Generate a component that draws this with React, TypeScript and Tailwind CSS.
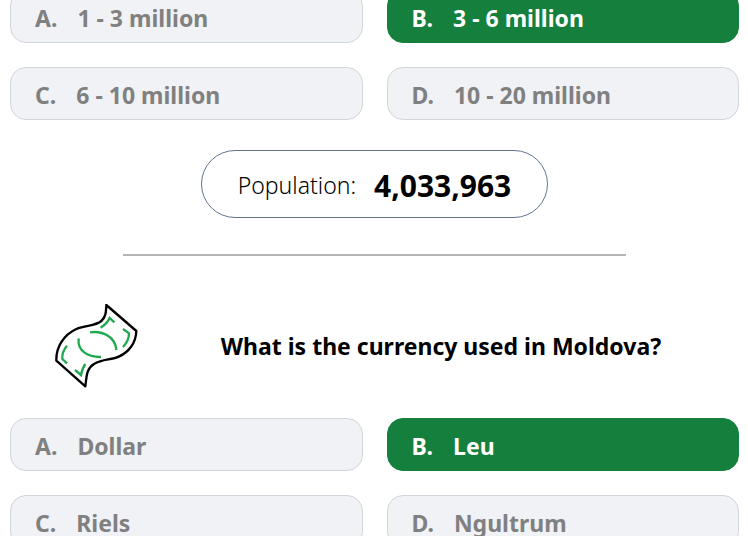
import React from 'react';
import clsx from 'clsx';

interface Option {
    letter: string;
    label: string;
    correct?: boolean;
}

const populationOptions: Option[] = [
    { letter: 'A', label: '1 - 3 million' },
    { letter: 'B', label: '3 - 6 million', correct: true },
    { letter: 'C', label: '6 - 10 million' },
    { letter: 'D', label: '10 - 20 million' },
];

const currencyOptions: Option[] = [
    { letter: 'A', label: 'Dollar' },
    { letter: 'B', label: 'Leu', correct: true },
    { letter: 'C', label: 'Riels' },
    { letter: 'D', label: 'Ngultrum' },
];

const BanknoteIcon = () => (
    <svg className="h-21 w-21 shrink-0" viewBox="45 42 252 252" fill="none" strokeWidth="7" aria-hidden="true">
        <path
            d="M199 45L289 123C288 160 265 187 238 199C213 211 190 206 162 222C139 236 140 259 136 289L49 212C48 170 72 134 109 117C137 104 164 110 184 93C199 80 198 62 199 45Z"
            stroke="#000"
            strokeLinejoin="round"
        />
        <g stroke="#22a94f">
            <path d="M150 127C190 121 227 143 229 180" />
            <path d="M116 145C111 184 146 202 183 201" />
            <path d="M182 113C196 104 204 96 209 84L223 97" />
            <path d="M249 117L267 130C267 146 260 160 249 171" />
            <path d="M81 167C69 181 66 195 67 207L81 220" />
            <path d="M136 222C127 234 125 245 123 255L105 240" />
        </g>
    </svg>
);

const OptionGrid = ({ options }: { options: Option[] }) => (
    <div className="grid grid-cols-2 gap-6">
        {options.map((option) => (
            <button
                key={option.letter}
                type="button"
                className={clsx(
                    'flex h-[53px] items-center gap-5 rounded-2xl border px-6 pt-1 text-left text-[23px] font-bold',
                    option.correct
                        ? 'border-[#15803d] bg-[#15803d] text-white'
                        : 'border-gray-300 bg-[#f0f2f5] text-[#808080]'
                )}
            >
                <span>{option.letter}.</span>
                <span>{option.label}</span>
            </button>
        ))}
    </div>
);

const App = () => {
    return (
        <main className="h-screen overflow-hidden bg-white pr-[9px] pl-[10px] font-['Noto_Sans','Open_Sans',sans-serif] text-black">
            {/* The list is scrolled a little past the first row */}
            <section className="-mt-[10px]">
                <OptionGrid options={populationOptions} />
                <div className="mt-[30px] flex justify-center">
                    <p className="flex h-[68px] items-center gap-[18px] rounded-full border border-slate-500 px-9 pt-0.5">
                        <span className="text-[23px] font-light">Population:</span>
                        <span className="text-[30px] font-bold">4,033,963</span>
                    </p>
                </div>
            </section>

            <hr className="mx-auto mt-9 w-[69%] border-t-2 border-[#b5b5b5]" />

            <section className="mt-12">
                <div className="flex items-center pl-[45px]">
                    <BanknoteIcon />
                    <h2 className="flex-1 pl-1 text-center text-[23px] font-bold">
                        What is the currency used in Moldova?
                    </h2>
                </div>
                <div className="mt-[30px]">
                    <OptionGrid options={currencyOptions} />
                </div>
            </section>
        </main>
    );
};

export default App;
